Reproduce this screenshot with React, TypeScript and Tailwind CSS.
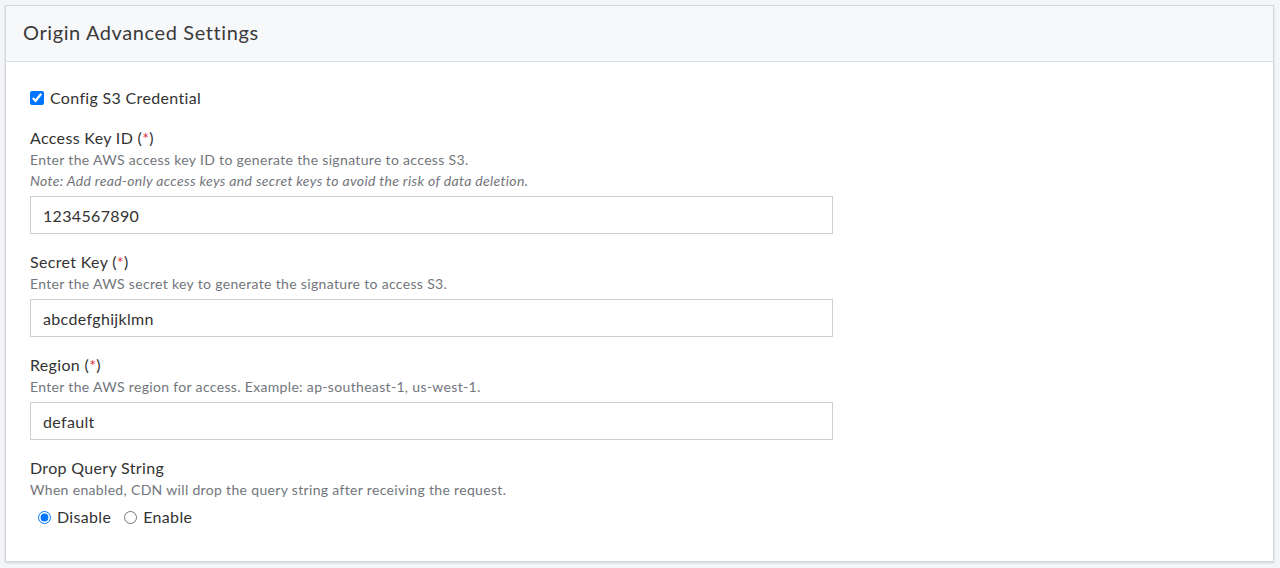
import { useState } from "react";

const fields = [
  {
    label: "Access Key ID",
    desc: "Enter the AWS access key ID to generate the signature to access S3.",
    note: "Note: Add read-only access keys and secret keys to avoid the risk of data deletion.",
    value: "1234567890",
  },
  {
    label: "Secret Key",
    desc: "Enter the AWS secret key to generate the signature to access S3.",
    value: "abcdefghijklmn",
  },
  {
    label: "Region",
    desc: "Enter the AWS region for access. Example: ap-southeast-1, us-west-1.",
    value: "default",
  },
];

export default function App() {
  const [dropQuery, setDropQuery] = useState("disable");
  return (
    <div className="min-h-[568px] bg-[#f4f5f7] p-[5px] pr-[6px] text-[#333] font-['Lato','Noto_Sans',sans-serif]">
      <div className="bg-white border border-[#d5d7db] shadow-[0_1px_2px_rgba(0,0,0,0.15)]">
        <div className="h-[56px] flex items-center px-[17px] pb-[4px] bg-[#f7f8fa] border-b border-[#dcdfe3]">
          <h2 className="text-[20px] tracking-[0.6px] text-[#3a3a3a]">Origin Advanced Settings</h2>
        </div>
        <div className="pl-[24px] pt-[25px] pb-[33px] tracking-[0.33px]">
          <label className="flex items-center gap-[6px] h-[22px] text-[16px]">
            <input type="checkbox" defaultChecked className="w-[14px] h-[14px] m-0" />
            Config S3 Credential
          </label>
          {fields.map((f, i) => (
            <div key={f.label} className={i === 0 ? "mt-[18px]" : "mt-[17px]"}>
              <div className="text-[16px] leading-[22px]">
                {f.label} (<span className="text-[#e0303a]">*</span>)
              </div>
              <div className="text-[14px] leading-[21px] text-[#72767c]">{f.desc}</div>
              {f.note && (
                <div className="text-[14px] leading-[21px] text-[#72767c] italic">{f.note}</div>
              )}
              <input
                defaultValue={f.value}
                className="mt-[5px] block w-[803px] h-[38px] border border-[#ccd0d5] px-[12px] text-[16px] tracking-[0.33px] text-[#333] outline-none"
              />
            </div>
          ))}
          <div className="mt-[17px]">
            <div className="text-[16px] leading-[22px]">Drop Query String</div>
            <div className="text-[14px] leading-[21px] text-[#72767c]">
              When enabled, CDN will drop the query string after receiving the request.
            </div>
            <div className="flex items-center gap-[13px] pl-[8px] mt-[6px] h-[22px] text-[16px]">
              <label className="flex items-center gap-[6px]">
                <input
                  type="radio"
                  name="dq"
                  checked={dropQuery === "disable"}
                  onChange={() => setDropQuery("disable")}
                  className="w-[13px] h-[13px] m-0"
                />
                Disable
              </label>
              <label className="flex items-center gap-[6px]">
                <input
                  type="radio"
                  name="dq"
                  checked={dropQuery === "enable"}
                  onChange={() => setDropQuery("enable")}
                  className="w-[13px] h-[13px] m-0"
                />
                Enable
              </label>
            </div>
          </div>
        </div>
      </div>
    </div>
  );
}
